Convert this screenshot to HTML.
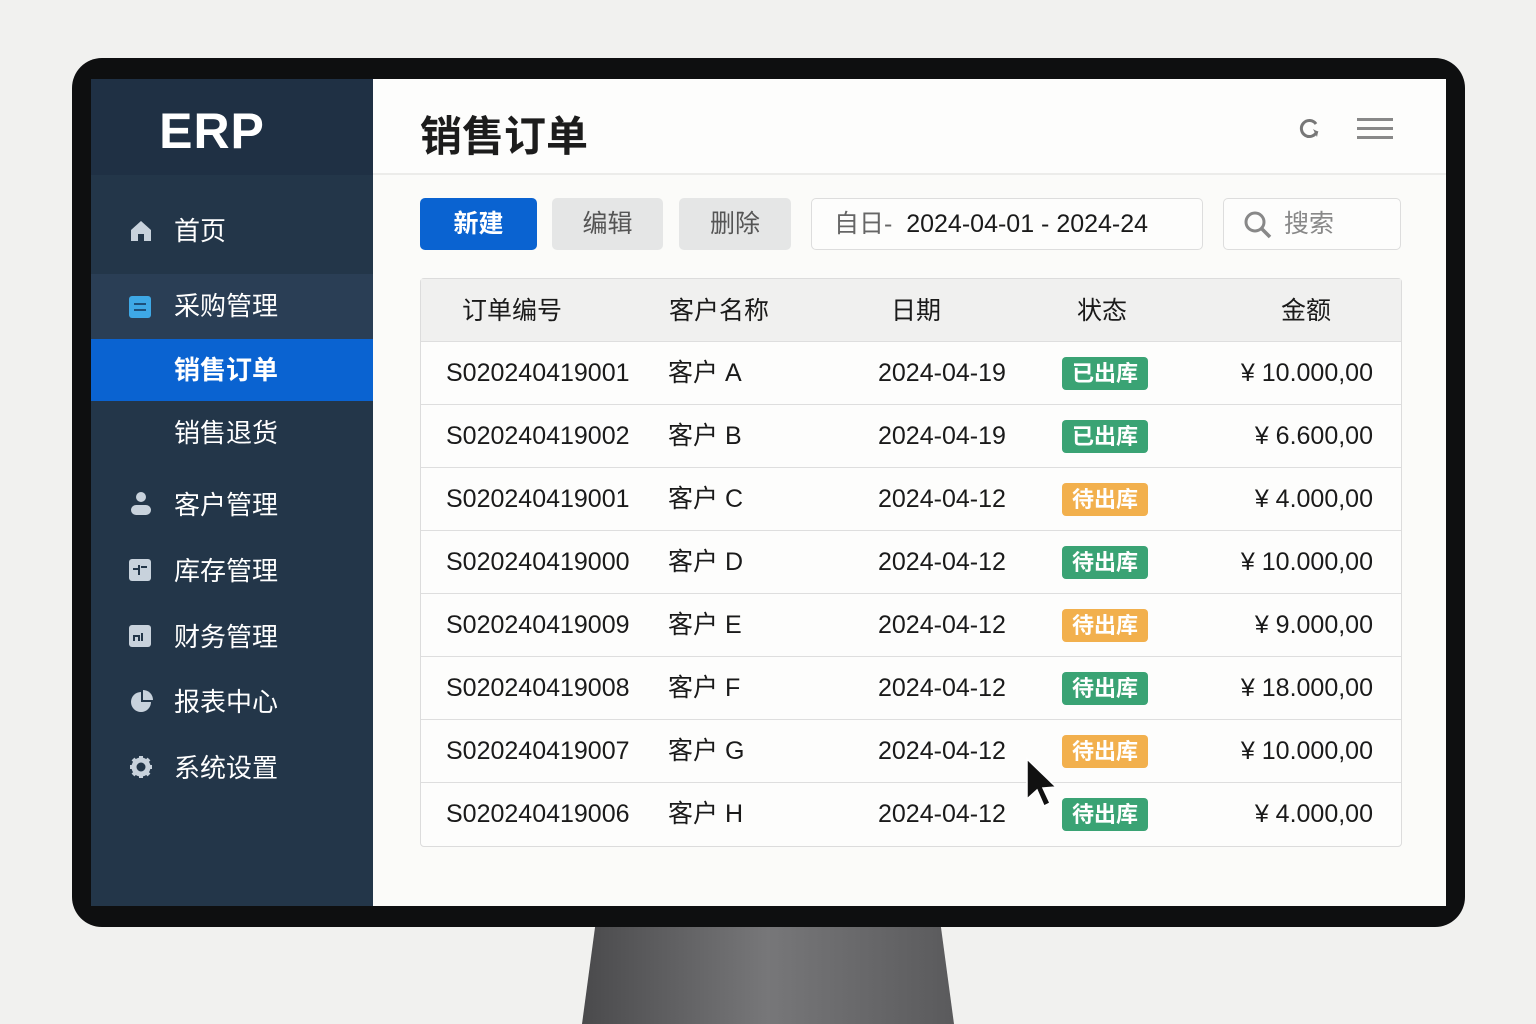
<!DOCTYPE html>
<html><head><meta charset="utf-8"><style>
*{margin:0;padding:0;box-sizing:border-box}
body{width:1536px;height:1024px;background:#f1f1ef;position:relative;overflow:hidden;font-family:"Liberation Sans","Noto Sans CJK SC",sans-serif}
.abs{position:absolute}
.stand{position:absolute;left:582px;top:920px;width:372px;height:104px;background:linear-gradient(90deg,#4a4a4c,#777779 50%,#5a5a5c);clip-path:polygon(14px 0,358px 0,372px 104px,0 104px)}
.bezel{position:absolute;left:72px;top:58px;width:1393px;height:869px;background:#0e0f10;border-radius:30px}
.screen{position:absolute;left:91px;top:79px;width:1355px;height:827px;background:#fbfbf9;overflow:hidden}
.side{position:absolute;left:0;top:0;width:282px;height:827px;background:#233649}
.logo{position:absolute;left:0;top:0;width:282px;height:96px;background:#1f3044;color:#fff;font-weight:bold;font-size:50px;text-align:center;line-height:104px;letter-spacing:1px;padding-right:40px}
.it{position:absolute;left:0;width:282px;color:#fff;font-size:26px;padding-left:83px}
.ic{position:absolute;left:38px}
.main{position:absolute;left:282px;top:0;right:0;bottom:0}
.btn{position:absolute;top:119px;height:52px;border-radius:5px;font-size:25px;text-align:center;line-height:52px}
.tbl{position:absolute;left:47px;top:199px;width:982px;height:569px;border:1px solid #dcdcdc;border-radius:4px;background:#fdfdfc}
.row{position:absolute;left:0;width:980px;height:63px;border-top:1px solid #dedede;font-size:25px;color:#1a1a1a;line-height:63px}
.row span{position:absolute}
.b{position:absolute;left:641px;top:15px;width:86px;height:33px;border-radius:4px;color:#fff;font-size:22px;line-height:33px;text-align:center;font-weight:bold}
.g{background:#3aa374}.o{background:#f2b04d}
.amt{right:28px}
</style></head><body>
<div class="stand"></div>
<div class="bezel"></div>
<div class="screen">
 <div class="side">
  <div class="logo">ERP</div>
  <div class="it" style="top:122px;height:60px;line-height:60px">首页</div>
  <svg class="ic" style="top:140px" width="24" height="24" viewBox="0 0 24 24"><path d="M12 2 L22 11 V22 H15 V15 H9 V22 H2 V11 Z" fill="#c8d2dc"/></svg>
  <div class="it" style="top:195px;height:65px;line-height:65px;background:#2a3e55">采购管理</div>
  <svg class="ic" style="top:217px" width="22" height="22"><rect width="22" height="22" rx="3" fill="#3ea8e6"/><path d="M5 8h12M5 14h12" stroke="#1d4f7a" stroke-width="2"/></svg>
  <div class="it" style="top:260px;height:62px;line-height:62px;background:#0a63d1;font-weight:bold">销售订单</div>
  <div class="it" style="top:322px;height:64px;line-height:64px">销售退货</div>
  <div class="it" style="top:396px;height:60px;line-height:60px">客户管理</div>
  <svg class="ic" style="top:412px" width="24" height="26"><circle cx="12" cy="6" r="5" fill="#c8d2dc"/><rect x="2" y="14" width="20" height="10" rx="5" fill="#c8d2dc"/></svg>
  <div class="it" style="top:462px;height:60px;line-height:60px">库存管理</div>
  <svg class="ic" style="top:480px" width="22" height="22"><rect width="22" height="22" rx="3" fill="#c8d2dc"/><path d="M4 10h6M10 6v10M12 8h6" stroke="#233649" stroke-width="2"/></svg>
  <div class="it" style="top:528px;height:60px;line-height:60px">财务管理</div>
  <svg class="ic" style="top:546px" width="22" height="22"><rect width="22" height="22" rx="3" fill="#c8d2dc"/><path d="M5 16v-5h5v5M13 8v8" stroke="#233649" stroke-width="2" fill="none"/></svg>
  <div class="it" style="top:593px;height:60px;line-height:60px">报表中心</div>
  <svg class="ic" style="top:611px" width="24" height="24"><path d="M12 2A10 10 0 1 0 22 12H12Z" fill="#c8d2dc"/><path d="M14 0A10 10 0 0 1 24 10H14Z" fill="#c8d2dc"/></svg>
  <div class="it" style="top:659px;height:60px;line-height:60px">系统设置</div>
  <svg class="ic" style="top:676px" width="24" height="24" viewBox="0 0 24 24"><circle cx="12" cy="12" r="7" fill="none" stroke="#c8d2dc" stroke-width="5"/><path d="M12 1v5M12 18v5M1 12h5M18 12h5M4 4l4 4M16 16l4 4M4 20l4-4M16 8l4-4" stroke="#c8d2dc" stroke-width="4"/></svg>
 </div>
 <div class="main">
  <div class="abs" style="left:0;top:0;width:1073px;height:96px;background:#fdfdfc;border-bottom:2px solid #ececea"></div>
  <div class="abs" style="left:47px;top:24px;font-size:42px;font-weight:bold;color:#1c1c1c">销售订单</div>
  <svg class="abs" style="left:924px;top:37px" width="24" height="24" viewBox="0 0 24 24"><path d="M19 8A8 8 0 1 0 20 15" fill="none" stroke="#777" stroke-width="3"/><path d="M16 13l5 3-1 5" fill="#777"/></svg>
  <div class="abs" style="left:984px;top:39px;width:36px;height:3px;background:#888;box-shadow:0 9px 0 #888,0 18px 0 #888"></div>
  <div class="btn" style="left:47px;width:117px;background:#0a63d1;color:#fff;font-weight:bold">新建</div>
  <div class="btn" style="left:179px;width:111px;background:#e5e6e6;color:#555">编辑</div>
  <div class="btn" style="left:306px;width:112px;background:#e5e6e6;color:#555">删除</div>
  <div class="btn" style="left:438px;width:392px;background:#fdfdfc;border:1px solid #ddd;color:#1a1a1a;text-align:left;padding-left:22px;line-height:50px"><span style="color:#666">自日-</span>&nbsp; 2024-04-01 - 2024-24</div>
  <div class="btn" style="left:850px;width:178px;background:#fdfdfc;border:1px solid #ddd;color:#888;text-align:left;padding-left:60px;line-height:50px">搜索</div>
  <svg class="abs" style="left:870px;top:131px" width="30" height="30"><circle cx="12" cy="12" r="9" fill="none" stroke="#888" stroke-width="3"/><path d="M19 19l8 8" stroke="#888" stroke-width="3.5"/></svg>
  <div class="tbl">
   <div class="row" style="top:0;border:none;background:#f0f0ef;height:62px;line-height:64px">
    <span style="left:41px">订单编号</span><span style="left:248px">客户名称</span><span style="left:470px">日期</span><span style="left:656px">状态</span><span style="left:860px">金额</span>
   </div>
   <div class="row" style="top:62px"><span style="left:25px">S020240419001</span><span style="left:247px">客户 A</span><span style="left:457px">2024-04-19</span><div class="b g">已出库</div><span class="amt">¥ 10.000,00</span></div>
   <div class="row" style="top:125px"><span style="left:25px">S020240419002</span><span style="left:247px">客户 B</span><span style="left:457px">2024-04-19</span><div class="b g">已出库</div><span class="amt">¥ 6.600,00</span></div>
   <div class="row" style="top:188px"><span style="left:25px">S020240419001</span><span style="left:247px">客户 C</span><span style="left:457px">2024-04-12</span><div class="b o">待出库</div><span class="amt">¥ 4.000,00</span></div>
   <div class="row" style="top:251px"><span style="left:25px">S020240419000</span><span style="left:247px">客户 D</span><span style="left:457px">2024-04-12</span><div class="b g">待出库</div><span class="amt">¥ 10.000,00</span></div>
   <div class="row" style="top:314px"><span style="left:25px">S020240419009</span><span style="left:247px">客户 E</span><span style="left:457px">2024-04-12</span><div class="b o">待出库</div><span class="amt">¥ 9.000,00</span></div>
   <div class="row" style="top:377px"><span style="left:25px">S020240419008</span><span style="left:247px">客户 F</span><span style="left:457px">2024-04-12</span><div class="b g">待出库</div><span class="amt">¥ 18.000,00</span></div>
   <div class="row" style="top:440px"><span style="left:25px">S020240419007</span><span style="left:247px">客户 G</span><span style="left:457px">2024-04-12</span><div class="b o">待出库</div><span class="amt">¥ 10.000,00</span></div>
   <div class="row" style="top:503px"><span style="left:25px">S020240419006</span><span style="left:247px">客户 H</span><span style="left:457px">2024-04-12</span><div class="b g">待出库</div><span class="amt">¥ 4.000,00</span></div>
  </div>
  <svg class="abs" style="left:652px;top:678px" width="34" height="52" viewBox="0 0 34 52"><path d="M2 2 L2 42 L12 33 L19 49 L25 46 L18 31 L31 30 Z" fill="#111" stroke="#fff" stroke-width="1.5"/></svg>
 </div>
</div>
</body></html>
